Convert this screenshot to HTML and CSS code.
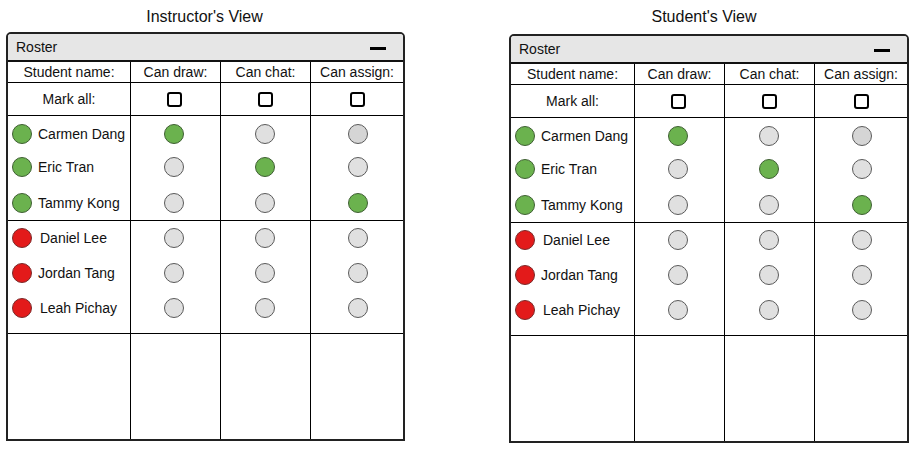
FILE: index.html
```html
<!DOCTYPE html>
<html lang="en">
<head>
<meta charset="utf-8">
<title>Roster views</title>
<link rel="stylesheet" href="styles.css">
</head>
<body>
<div class="page">
  <section class="view view--instructor">
    <h2 class="view-title">Instructor's View</h2>
    <div class="roster">
      <div class="roster-bar"><span class="roster-label">Roster</span><span class="minimize"></span></div>
      <div class="roster-grid">
        <div class="cell head">Student name:</div>
        <div class="cell head">Can draw:</div>
        <div class="cell head">Can chat:</div>
        <div class="cell head">Can assign:</div>

        <div class="cell mark">Mark all:</div>
        <div class="cell center col-draw"><span class="checkbox"></span></div>
        <div class="cell center col-chat"><span class="checkbox"></span></div>
        <div class="cell center col-assign"><span class="checkbox"></span></div>

        <div class="cell stack stack--first names">
          <div class="item"><span class="dot dot--on"></span><span class="name">Carmen Dang</span></div>
          <div class="item"><span class="dot dot--on"></span><span class="name">Eric Tran</span></div>
          <div class="item"><span class="dot dot--on"></span><span class="name">Tammy Kong</span></div>
        </div>
        <div class="cell stack stack--first col-draw">
          <div class="item"><span class="dot dot--on"></span></div>
          <div class="item"><span class="dot"></span></div>
          <div class="item"><span class="dot"></span></div>
        </div>
        <div class="cell stack stack--first col-chat">
          <div class="item"><span class="dot"></span></div>
          <div class="item"><span class="dot dot--on"></span></div>
          <div class="item"><span class="dot"></span></div>
        </div>
        <div class="cell stack stack--first col-assign">
          <div class="item"><span class="dot dot--dim"></span></div>
          <div class="item"><span class="dot"></span></div>
          <div class="item"><span class="dot dot--on"></span></div>
        </div>

        <div class="cell stack stack--second names">
          <div class="item"><span class="dot dot--off"></span><span class="name name--shift">Daniel Lee</span></div>
          <div class="item"><span class="dot dot--off"></span><span class="name">Jordan Tang</span></div>
          <div class="item"><span class="dot dot--off"></span><span class="name name--shift">Leah Pichay</span></div>
        </div>
        <div class="cell stack stack--second col-draw">
          <div class="item"><span class="dot"></span></div>
          <div class="item"><span class="dot"></span></div>
          <div class="item"><span class="dot"></span></div>
        </div>
        <div class="cell stack stack--second col-chat">
          <div class="item"><span class="dot"></span></div>
          <div class="item"><span class="dot"></span></div>
          <div class="item"><span class="dot"></span></div>
        </div>
        <div class="cell stack stack--second col-assign">
          <div class="item"><span class="dot"></span></div>
          <div class="item"><span class="dot"></span></div>
          <div class="item"><span class="dot"></span></div>
        </div>

        <div class="cell"></div>
        <div class="cell"></div>
        <div class="cell"></div>
        <div class="cell"></div>
      </div>
    </div>
  </section>

  <section class="view view--student">
    <h2 class="view-title">Student's View</h2>
    <div class="roster">
      <div class="roster-bar"><span class="roster-label">Roster</span><span class="minimize"></span></div>
      <div class="roster-grid">
        <div class="cell head">Student name:</div>
        <div class="cell head">Can draw:</div>
        <div class="cell head">Can chat:</div>
        <div class="cell head">Can assign:</div>

        <div class="cell mark">Mark all:</div>
        <div class="cell center col-draw"><span class="checkbox"></span></div>
        <div class="cell center col-chat"><span class="checkbox"></span></div>
        <div class="cell center col-assign"><span class="checkbox"></span></div>

        <div class="cell stack stack--first names">
          <div class="item"><span class="dot dot--on"></span><span class="name">Carmen Dang</span></div>
          <div class="item"><span class="dot dot--on"></span><span class="name">Eric Tran</span></div>
          <div class="item"><span class="dot dot--on"></span><span class="name">Tammy Kong</span></div>
        </div>
        <div class="cell stack stack--first col-draw">
          <div class="item"><span class="dot dot--on"></span></div>
          <div class="item"><span class="dot"></span></div>
          <div class="item"><span class="dot"></span></div>
        </div>
        <div class="cell stack stack--first col-chat">
          <div class="item"><span class="dot"></span></div>
          <div class="item"><span class="dot dot--on"></span></div>
          <div class="item"><span class="dot"></span></div>
        </div>
        <div class="cell stack stack--first col-assign">
          <div class="item"><span class="dot dot--dim"></span></div>
          <div class="item"><span class="dot"></span></div>
          <div class="item"><span class="dot dot--on"></span></div>
        </div>

        <div class="cell stack stack--second names">
          <div class="item"><span class="dot dot--off"></span><span class="name name--shift">Daniel Lee</span></div>
          <div class="item"><span class="dot dot--off"></span><span class="name">Jordan Tang</span></div>
          <div class="item"><span class="dot dot--off"></span><span class="name name--shift">Leah Pichay</span></div>
        </div>
        <div class="cell stack stack--second col-draw">
          <div class="item"><span class="dot"></span></div>
          <div class="item"><span class="dot"></span></div>
          <div class="item"><span class="dot"></span></div>
        </div>
        <div class="cell stack stack--second col-chat">
          <div class="item"><span class="dot"></span></div>
          <div class="item"><span class="dot"></span></div>
          <div class="item"><span class="dot"></span></div>
        </div>
        <div class="cell stack stack--second col-assign">
          <div class="item"><span class="dot"></span></div>
          <div class="item"><span class="dot"></span></div>
          <div class="item"><span class="dot"></span></div>
        </div>

        <div class="cell"></div>
        <div class="cell"></div>
        <div class="cell"></div>
        <div class="cell"></div>
      </div>
    </div>
  </section>
</div>
</body>
</html>
```

FILE: styles.css
```css
html, body {
  margin: 0;
  padding: 0;
  background: #fff;
}

body {
  font-family: "Liberation Sans", Arial, sans-serif;
  color: #111;
  font-size: 14px;
}

.page {
  display: flex;
  align-items: flex-start;
  padding-left: 6px;
  gap: 104px;
}

.view--instructor {
  width: 399px;
}

.view--student {
  width: 400px;
}

.view-title {
  margin: 0;
  height: 31px;
  padding-top: 1px;
  line-height: 32px;
  font-size: 16px;
  font-weight: normal;
  text-align: center;
  color: #111;
}

.view--instructor .view-title {
  padding-right: 2px;
}

.view--student .view-title {
  padding-right: 10px;
  margin-bottom: 2px;
}

.roster {
  height: 409px;
  box-sizing: border-box;
  border: 2px solid #222;
  border-radius: 5px 5px 0 0;
  display: flex;
  flex-direction: column;
  overflow: hidden;
}

.roster-bar {
  height: 26px;
  flex: none;
  background: #e6e6e6;
  border-bottom: 2px solid #111;
  display: flex;
  align-items: center;
  justify-content: space-between;
  padding: 0 17px 0 8px;
}

.roster-label {
  line-height: 20px;
  margin-top: -1px;
}

.minimize {
  width: 16px;
  height: 3px;
  background: #000;
  margin-top: 2px;
}

.roster-grid {
  flex: 1;
  display: grid;
  grid-template-columns: 1fr 89px 89px 92px;
  grid-template-rows: 20px 32px 104px 112px 1fr;
  gap: 1px;
  background: #000;
}

.cell {
  background: #fff;
}

.head {
  text-align: center;
  line-height: 20px;
}

.mark {
  display: flex;
  align-items: center;
  justify-content: center;
}

.center {
  display: flex;
  align-items: center;
  justify-content: center;
}

.col-draw {
  padding-right: 3px;
}

.col-chat {
  padding-right: 1px;
}

.col-assign {
  padding-left: 1px;
}

.checkbox {
  width: 11px;
  height: 11px;
  border: 2px solid #000;
  border-radius: 3px;
}

.stack {
  display: flex;
  flex-direction: column;
}

.stack--first {
  padding-top: 8px;
  gap: 13px;
}

.stack--first .item:nth-child(3) {
  margin-top: 3px;
}

.stack--second {
  padding-top: 7px;
  gap: 15px;
}

.item {
  height: 20px;
  display: flex;
  align-items: center;
  justify-content: center;
}

.names .item {
  justify-content: flex-start;
  padding-left: 4px;
  gap: 6px;
}

.name {
  line-height: 20px;
  white-space: nowrap;
}

.name--shift {
  margin-left: 2px;
}

.dot {
  width: 18px;
  height: 18px;
  border-radius: 50%;
  border: 1px solid #5a5a5a;
  background: #e0e0e0;
  flex: none;
}

.dot--on {
  background: #6bb24e;
  border-color: #3f5f33;
}

.dot--off {
  background: #e31a1a;
  border-color: #7a2a2a;
}

.dot--dim {
  background: #d5d5d5;
}
```
